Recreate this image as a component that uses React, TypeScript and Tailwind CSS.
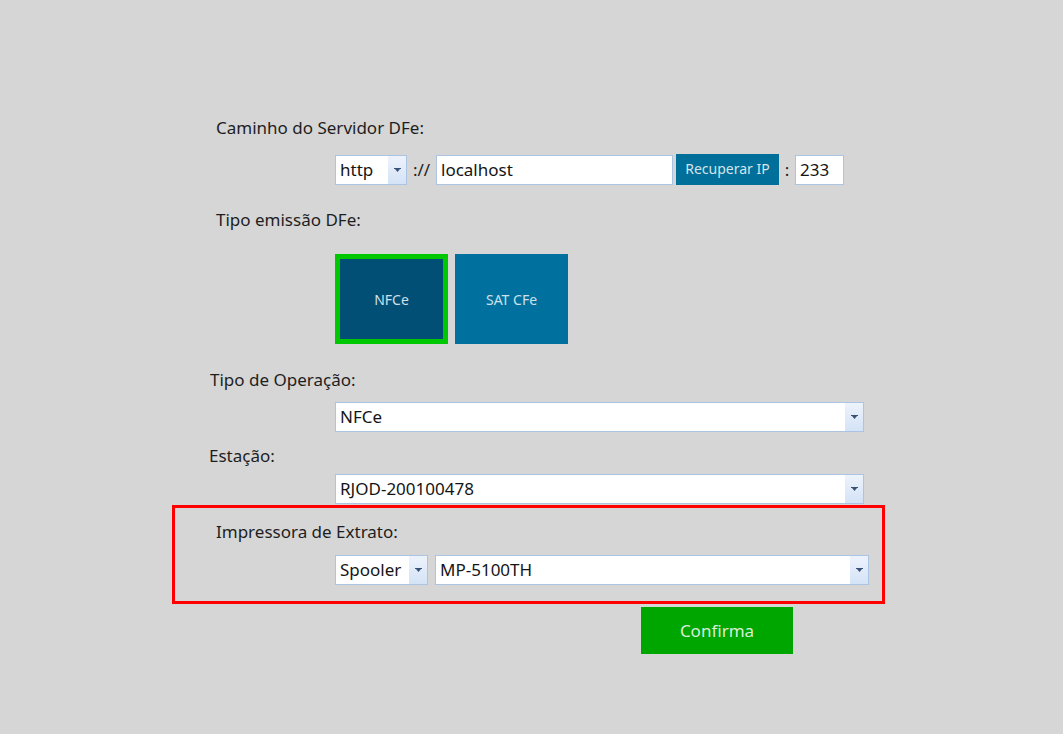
const Arrow = () => (
  <svg width="7" height="4" viewBox="0 0 7 4">
    <path d="M0 0h7v1H0zM1 1h5L3.5 4z" fill="#3a5277" />
  </svg>
);

const Select = ({ value, w }: { value: string; w: string }) => (
  <div className={`flex h-[30px] items-stretch border border-[#abc4e2] bg-white ${w}`}>
    <span className="flex-1 pl-[4px] text-[17px] leading-[28px] text-[#151515]">{value}</span>
    <span className="flex w-[18px] items-center justify-center bg-linear-to-b from-[#edf3fc] to-[#d4e3f6]">
      <Arrow />
    </span>
  </div>
);

const Field = ({ value, w }: { value: string; w: string }) => (
  <div className={`h-[30px] border border-[#abc4e2] bg-white pl-[4px] text-[17px] leading-[28px] text-[#151515] ${w}`}>
    {value}
  </div>
);

export default function App() {
  return (
    <div className="min-h-[734px] w-full bg-[#d6d6d6] font-['Noto_Sans',sans-serif] text-[#1e1e1e]">
      <div className="ml-[172px] w-[713px] pt-[117px]">
        <div className="pl-[44px] text-[17px] leading-[22px]">Caminho do Servidor DFe:</div>
        <div className="mt-[15px] flex items-center pl-[163px]">
          <Select value="http" w="w-[72px]" />
          <span className="w-[29px] text-center text-[17px] leading-[30px]">://</span>
          <Field value="localhost" w="w-[237px]" />
          <button className="ml-[3px] h-[31px] w-[103px] bg-[#006f9a] pb-[2px] text-[14px] text-[#d6e4ec]">
            Recuperar IP
          </button>
          <span className="w-[16px] text-center text-[17px] leading-[30px]">:</span>
          <Field value="233" w="w-[49px]" />
        </div>

        <div className="mt-[24px] pl-[44px] text-[17px] leading-[22px]">Tipo emissão DFe:</div>
        <div className="mt-[23px] flex gap-[7px] pl-[163px]">
          <div className="flex h-[90px] w-[113px] items-center justify-center border-[5px] border-[#00c800] bg-[#024f75] text-[14px] text-[#cfe0ea]">
            NFCe
          </div>
          <div className="flex h-[90px] w-[113px] items-center justify-center bg-[#00719e] text-[14px] text-[#cfe0ea]">
            SAT CFe
          </div>
        </div>

        <div className="mt-[25px] pl-[38px] text-[17px] leading-[22px]">Tipo de Operação:</div>
        <div className="mt-[11px] pl-[163px]">
          <Select value="NFCe" w="w-[529px]" />
        </div>

        <div className="mt-[13px] pl-[37px] text-[17px] leading-[22px]">Estação:</div>
        <div className="mt-[7px] pl-[163px]">
          <Select value="RJOD-200100478" w="w-[529px]" />
        </div>

        <div className="mt-[1px] border-[3px] border-[#ff0000] pt-[13px] pb-[16px]">
          <div className="pl-[41px] text-[17px] leading-[22px]">Impressora de Extrato:</div>
          <div className="mt-[12px] flex gap-[7px] pl-[160px]">
            <Select value="Spooler" w="w-[93px]" />
            <Select value="MP-5100TH" w="w-[434px]" />
          </div>
        </div>

        <div className="mt-[3px] pl-[469px]">
          <button className="h-[47px] w-[152px] bg-[#00a600] text-[17px] text-[#d8eed8]">Confirma</button>
        </div>
      </div>
    </div>
  );
}
